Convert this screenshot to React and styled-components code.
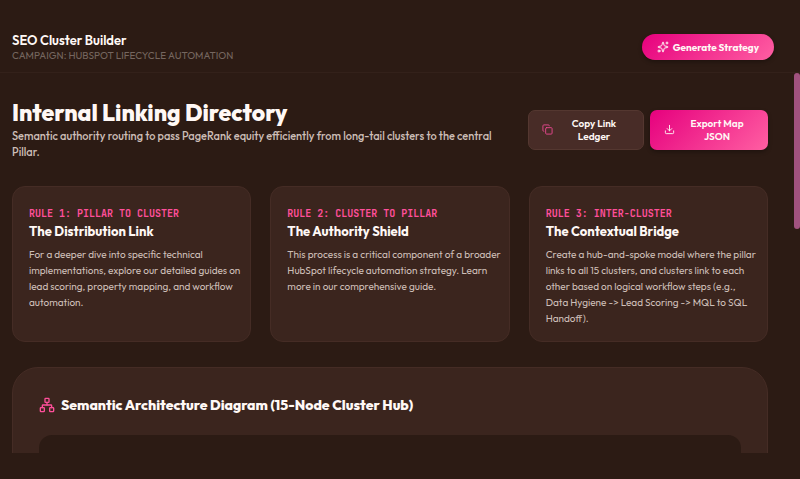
import React from 'react';
import styled, { createGlobalStyle } from 'styled-components';
import { Copy, Download, Network, Sparkles } from 'lucide-react';

const rules = [
  {
    label: 'RULE 1: PILLAR TO CLUSTER',
    title: 'The Distribution Link',
    text: 'For a deeper dive into specific technical implementations, explore our detailed guides on lead scoring, property mapping, and workflow automation.',
  },
  {
    label: 'RULE 2: CLUSTER TO PILLAR',
    title: 'The Authority Shield',
    text: 'This process is a critical component of a broader HubSpot lifecycle automation strategy. Learn more in our comprehensive guide.',
  },
  {
    label: 'RULE 3: INTER-CLUSTER',
    title: 'The Contextual Bridge',
    text: 'Create a hub-and-spoke model where the pillar links to all 15 clusters, and clusters link to each other based on logical workflow steps (e.g., Data Hygiene -> Lead Scoring -> MQL to SQL Handoff).',
  },
];

const App = () => {
  return (
    <>
      <GlobalStyle />
      <Page>
        <TopBar>
          <div>
            <AppName>SEO Cluster Builder</AppName>
            <Campaign>CAMPAIGN: HUBSPOT LIFECYCLE AUTOMATION</Campaign>
          </div>
          <GenerateButton type="button">
            <Sparkles size={12} />
            Generate Strategy
          </GenerateButton>
        </TopBar>
        <ScrollArea>
          <Content>
            <Intro>
              <IntroText>
                <h1>Internal Linking Directory</h1>
                <p>
                  Semantic authority routing to pass PageRank equity efficiently
                  from long-tail clusters to the central Pillar.
                </p>
              </IntroText>
              <Actions>
                <ActionButton type="button">
                  <Copy size={11} color="#e8488f" />
                  <span>Copy Link Ledger</span>
                </ActionButton>
                <ActionButton type="button" $primary>
                  <Download size={11} />
                  <span>Export Map JSON</span>
                </ActionButton>
              </Actions>
            </Intro>
            <RuleGrid>
              {rules.map((rule) => (
                <RuleCard key={rule.label}>
                  <RuleLabel>{rule.label}</RuleLabel>
                  <RuleTitle>{rule.title}</RuleTitle>
                  <RuleText>{rule.text}</RuleText>
                </RuleCard>
              ))}
            </RuleGrid>
            <DiagramPanel>
              <DiagramTitle>
                <Network size={16} color="#ff4f9a" />
                Semantic Architecture Diagram (15-Node Cluster Hub)
              </DiagramTitle>
              <DiagramCanvas />
            </DiagramPanel>
          </Content>
          <ScrollRail>
            <ScrollThumb />
          </ScrollRail>
        </ScrollArea>
      </Page>
    </>
  );
};

const GlobalStyle = createGlobalStyle`
  * {
    box-sizing: border-box;
    margin: 0;
  }
  body {
    background: #2c1b14;
    color: #fff8f5;
    font-family: 'Outfit', 'Lato', sans-serif;
  }
  button {
    font-family: inherit;
    cursor: pointer;
  }
`;

const Page = styled.div`
  display: flex;
  flex-direction: column;
  height: 100vh;
  padding-bottom: 26px;
  overflow: hidden;
`;

const TopBar = styled.header`
  display: flex;
  flex-shrink: 0;
  justify-content: space-between;
  align-items: center;
  padding: 31px 26px 9px 12px;
  border-bottom: 1px solid #33211a;
`;

const AppName = styled.div`
  font-size: 13px;
  font-weight: 600;
  line-height: 18px;
`;

const Campaign = styled.div`
  color: #75665f;
  font-size: 10px;
  font-weight: 400;
  line-height: 14px;
`;

const GenerateButton = styled.button`
  display: flex;
  align-items: center;
  gap: 4px;
  height: 26px;
  padding: 0 15px;
  border: none;
  border-radius: 13px;
  background: linear-gradient(135deg, #e6007e, #ff5fa2);
  box-shadow: 0 2px 4px rgba(0, 0, 0, 0.3);
  color: #fff8f5;
  font-size: 10px;
  font-weight: 700;
`;

const ScrollArea = styled.div`
  display: flex;
  flex: 1;
  min-height: 0;
`;

const Content = styled.main`
  flex: 1;
  min-width: 0;
  padding: 26px 26px 0 12px;
  overflow: hidden;
`;

const ScrollRail = styled.div`
  flex: 0 0 6px;
`;

const ScrollThumb = styled.div`
  height: 41%;
  border-radius: 3px;
  background: #a1527f;
`;

const Intro = styled.section`
  display: flex;
  align-items: center;
  justify-content: space-between;
  gap: 24px;
  margin-bottom: 26px;
`;

const IntroText = styled.div`
  > h1 {
    margin-bottom: 1px;
    font-size: 23px;
    font-weight: 800;
    line-height: 28px;
  }
  > p {
    color: #cdbeb7;
    font-size: 11px;
    font-weight: 500;
    line-height: 16px;
  }
`;

const Actions = styled.div`
  display: flex;
  flex-shrink: 0;
  gap: 6px;
`;

const ActionButton = styled.button`
  display: flex;
  align-items: center;
  gap: 5px;
  width: ${(props) => (props.$primary ? 118 : 116)}px;
  padding: 6px 13px;
  border: 1px solid ${(props) => (props.$primary ? 'transparent' : '#543730')};
  border-radius: 7px;
  background: ${(props) =>
    props.$primary
      ? 'linear-gradient(135deg, #e6007e, #ff5fa2) border-box'
      : '#482c27'};
  box-shadow: ${(props) =>
    props.$primary ? '0 2px 4px rgba(0, 0, 0, 0.3)' : 'none'};
  color: #fff8f5;
  font-size: 10px;
  font-weight: 600;
  line-height: 13px;
  > svg {
    flex-shrink: 0;
  }
  > span {
    flex: 1;
  }
`;

const RuleGrid = styled.section`
  display: grid;
  grid-template-columns: repeat(3, 1fr);
  gap: 19px;
  margin-bottom: 25px;
`;

const RuleCard = styled.article`
  padding: 20px 7px 14px 16px;
  border: 1px solid #452c25;
  border-radius: 13px;
  background: #3b251e;
`;

const RuleLabel = styled.div`
  color: #ff4f9a;
  font-family: 'JetBrains Mono', 'DejaVu Sans Mono', monospace;
  font-size: 10px;
  font-weight: 700;
  line-height: 14px;
`;

const RuleTitle = styled.h2`
  margin-bottom: 6px;
  font-size: 13px;
  font-weight: 700;
  line-height: 20px;
`;

const RuleText = styled.p`
  color: #cdbeb7;
  font-size: 10px;
  line-height: 16px;
`;

const DiagramPanel = styled.section`
  padding: 26px;
  border: 1px solid #452c25;
  border-radius: 26px;
  background: #3b251e;
`;

const DiagramTitle = styled.h2`
  display: flex;
  align-items: center;
  gap: 6px;
  margin-bottom: 19px;
  font-size: 14px;
  font-weight: 800;
  line-height: 22px;
`;

const DiagramCanvas = styled.div`
  height: 320px;
  border-radius: 13px;
  background: #2c1b14;
`;

export default App;
